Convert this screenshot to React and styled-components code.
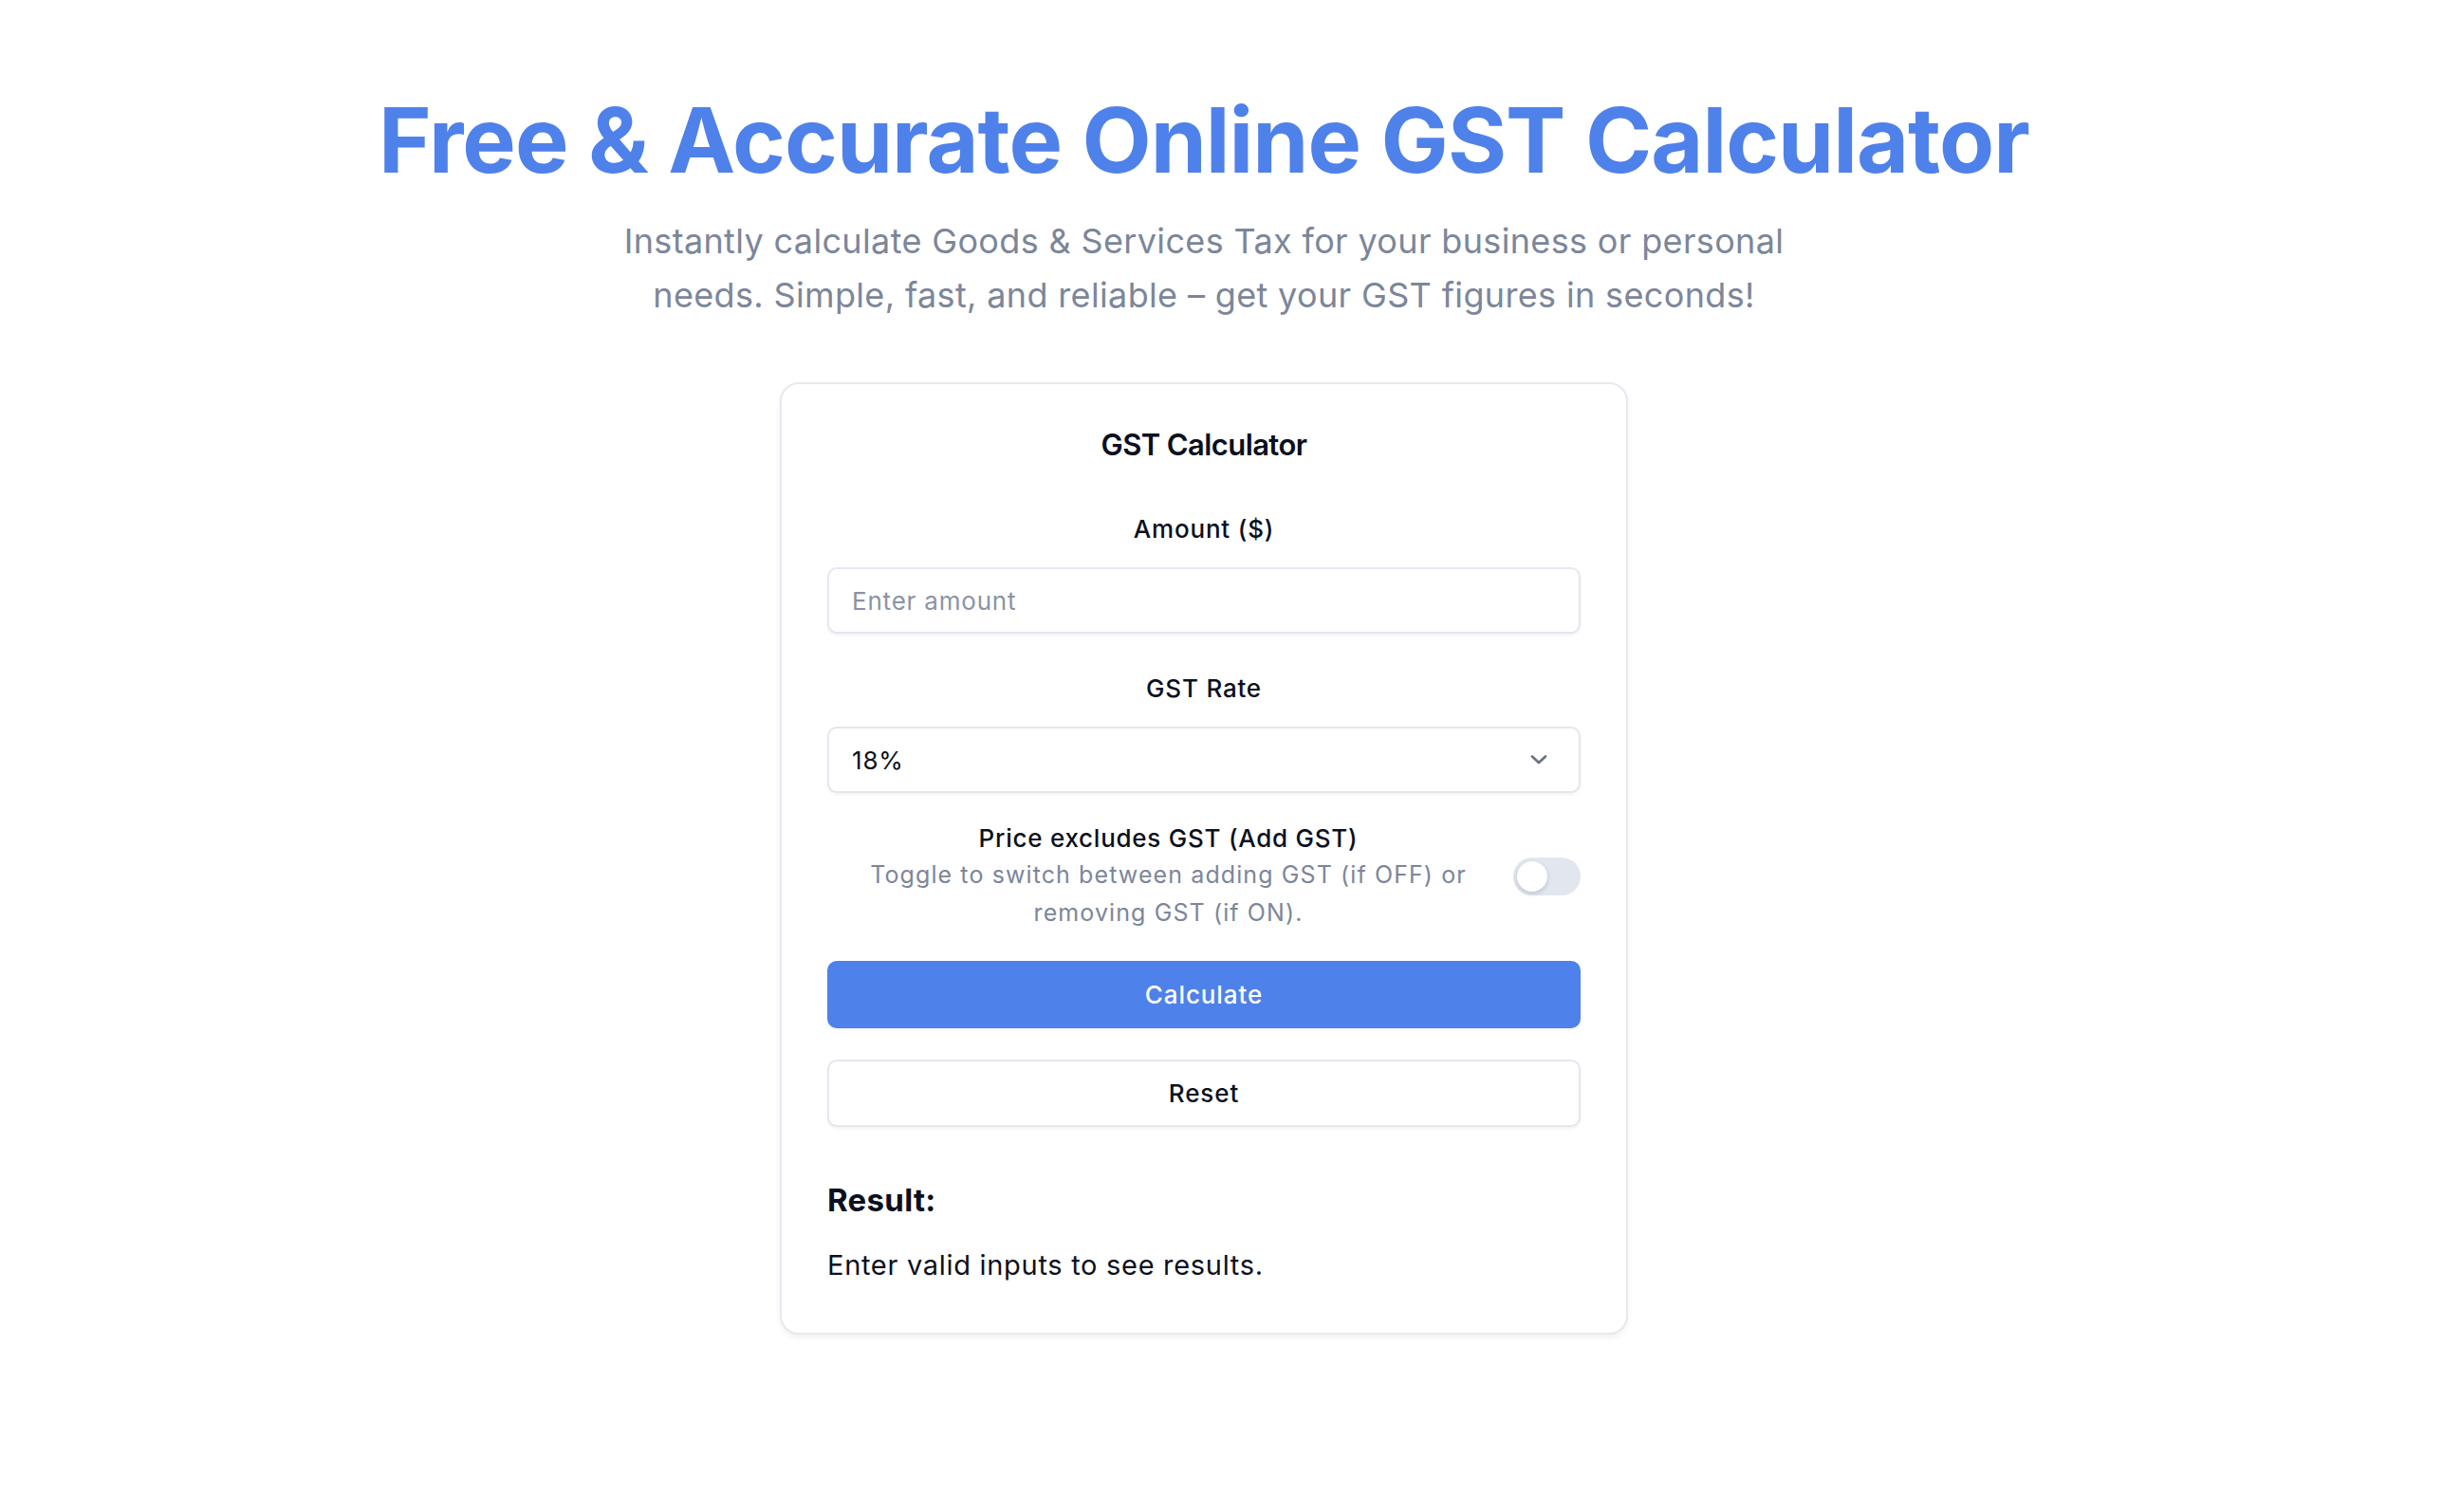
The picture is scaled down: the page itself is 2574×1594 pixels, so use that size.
import React, { useState } from 'react';
import styled, { createGlobalStyle } from 'styled-components';

const GlobalStyle = createGlobalStyle`
  body {
    margin: 0;
    background: #ffffff;
    font-family: 'Inter', 'Noto Sans', sans-serif;
    color: #0f172a;
  }
  * { box-sizing: border-box; }
`;

const Page = styled.main`
  display: flex;
  flex-direction: column;
  align-items: center;
  padding: 100px 36px 120px 0;
`;

const Title = styled.h1`
  margin: 0;
  font-size: 95px;
  line-height: 1;
  font-weight: 700;
  letter-spacing: -1px;
  color: #4f81ea;
  text-align: center;
`;

const Subtitle = styled.p`
  margin: 31px 0 0;
  max-width: 1280px;
  font-size: 36px;
  line-height: 57px;
  letter-spacing: 0.35px;
  color: #7c869a;
  text-align: center;
`;

const Card = styled.section`
  margin-top: 63px;
  width: 894px;
  padding: 44px 48px 49px;
  border: 2px solid #e6e9ef;
  border-radius: 20px;
  background: #fff;
  box-shadow: 0 3px 6px rgba(15, 23, 42, 0.06);
  display: flex;
  flex-direction: column;
`;

const CardTitle = styled.h2`
  margin: 0;
  font-size: 31px;
  line-height: 40px;
  font-weight: 600;
  letter-spacing: -0.6px;
  text-align: center;
  color: #0b1020;
`;

const Field = styled.div`
  display: flex;
  flex-direction: column;
  gap: 22px;
  margin-top: ${(p) => p.$top}px;
`;

const Label = styled.label`
  font-size: 26px;
  line-height: 36px;
  font-weight: 500;
  letter-spacing: 0.8px;
  text-align: center;
  color: #0b1020;
`;

const boxStyle = `
  width: 100%;
  height: 70px;
  border: 2px solid #e3e7ee;
  border-radius: 10px;
  background: #fff;
  box-shadow: 0 2px 3px rgba(15, 23, 42, 0.05);
  font-family: 'Inter', 'Noto Sans', sans-serif;
  font-size: 26px;
  letter-spacing: 0.8px;
  padding: 0 24px;
`;

const Input = styled.input`
  ${boxStyle}
  color: #0b1020;
  outline: none;
  &::placeholder { color: #8a93a6; }
`;

const SelectBox = styled.div`
  ${boxStyle}
  display: flex;
  align-items: center;
  justify-content: space-between;
  padding-right: 30px;
  color: #0b1020;
`;

const ToggleRow = styled.div`
  display: flex;
  align-items: center;
  gap: 4px;
  margin: 30px 0 31px;
`;

const ToggleText = styled.div`
  flex: 1;
  text-align: center;
`;

const ToggleTitle = styled.div`
  font-size: 26px;
  line-height: 36px;
  font-weight: 500;
  letter-spacing: 0.75px;
  color: #0b1020;
`;

const ToggleHint = styled.div`
  font-size: 25px;
  line-height: 40px;
  letter-spacing: 1.1px;
  color: #7c869a;
`;

const Track = styled.button`
  flex: none;
  position: relative;
  width: 71px;
  height: 40px;
  border: none;
  border-radius: 20px;
  padding: 0;
  background: ${(p) => (p.$on ? '#4f81ea' : '#e2e7ef')};
  cursor: pointer;
`;

const Knob = styled.span`
  position: absolute;
  top: 4px;
  left: ${(p) => (p.$on ? '35px' : '4px')};
  width: 32px;
  height: 32px;
  border-radius: 50%;
  background: #fff;
  box-shadow: 0 2px 5px rgba(15, 23, 42, 0.18);
`;

const Button = styled.button`
  height: 71px;
  width: 100%;
  border-radius: 10px;
  font-family: 'Inter', 'Noto Sans', sans-serif;
  font-size: 26px;
  font-weight: 500;
  letter-spacing: 0.9px;
  cursor: pointer;
  border: 2px solid ${(p) => (p.$primary ? '#4f81ea' : '#e3e7ee')};
  background: ${(p) => (p.$primary ? '#4f81ea' : '#fff')};
  color: ${(p) => (p.$primary ? '#fff' : '#0b1020')};
  box-shadow: 0 2px 3px rgba(15, 23, 42, 0.06);
  & + & { margin-top: 33px; }
`;

const ResultTitle = styled.h3`
  margin: 55px 0 0;
  font-size: 33px;
  line-height: 44px;
  font-weight: 700;
  letter-spacing: 0.3px;
  color: #0b1020;
`;

const ResultText = styled.p`
  margin: 25px 0 0;
  font-size: 29px;
  line-height: 44px;
  letter-spacing: 0.7px;
  color: #0b1020;
`;

function Chevron() {
  return (
    <svg width="24" height="14" viewBox="0 0 24 14" fill="none">
      <path d="M5 3.5l7 6.5 7-6.5" stroke="#6b7385" strokeWidth="2.8" strokeLinecap="round" strokeLinejoin="round" />
    </svg>
  );
}

export default function App() {
  const [inclusive, setInclusive] = useState(false);
  return (
    <>
      <GlobalStyle />
      <Page>
        <Title>Free &amp; Accurate Online GST Calculator</Title>
        <Subtitle>
          Instantly calculate Goods &amp; Services Tax for your business or personal needs. Simple,
          fast, and reliable – get your GST figures in seconds!
        </Subtitle>
        <Card>
          <CardTitle>GST Calculator</CardTitle>
          <Field $top={51}>
            <Label>Amount ($)</Label>
            <Input placeholder="Enter amount" />
          </Field>
          <Field $top={40}>
            <Label>GST Rate</Label>
            <SelectBox>
              <span>18%</span>
              <Chevron />
            </SelectBox>
          </Field>
          <ToggleRow>
            <ToggleText>
              <ToggleTitle>Price excludes GST (Add GST)</ToggleTitle>
              <ToggleHint>
                Toggle to switch between adding GST (if OFF) or removing GST (if ON).
              </ToggleHint>
            </ToggleText>
            <Track $on={inclusive} onClick={() => setInclusive(!inclusive)}>
              <Knob $on={inclusive} />
            </Track>
          </ToggleRow>
          <Button $primary>Calculate</Button>
          <Button>Reset</Button>
          <ResultTitle>Result:</ResultTitle>
          <ResultText>Enter valid inputs to see results.</ResultText>
        </Card>
      </Page>
    </>
  );
}
